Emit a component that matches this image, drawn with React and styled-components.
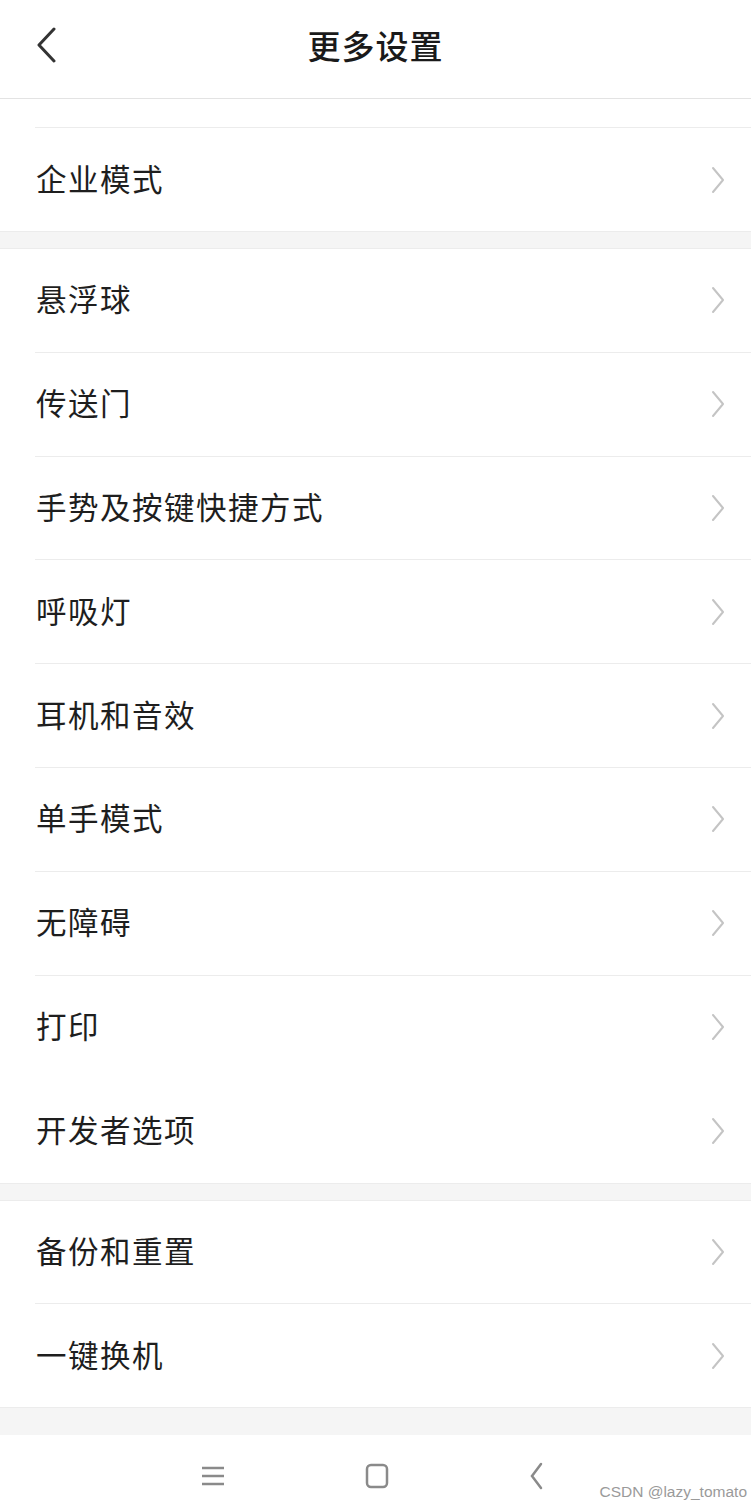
import React from 'react';
import styled, { createGlobalStyle } from 'styled-components';

const GlobalStyle = createGlobalStyle`
  html, body {
    margin: 0;
    padding: 0;
    background: #ffffff;
  }
  body {
    font-family: 'Noto Sans CJK SC', 'Noto Sans', sans-serif;
  }
`;

const StyledPage = styled.div`
  width: 751px;
  height: 1509px;
  display: flex;
  flex-direction: column;
  background: #f5f5f5;
  overflow: hidden;
  position: relative;
`;

const StyledHeader = styled.header`
  height: 98px;
  flex-shrink: 0;
  display: grid;
  grid-template-columns: 100px 1fr 100px;
  align-items: center;
  background: #fff;
  border-bottom: 1px solid #e3e3e3;

  h1 {
    margin: 0;
    text-align: center;
    font-size: 33px;
    font-weight: 500;
    color: #1a1a1a;
    letter-spacing: 1px;
    padding-bottom: 8px;
  }
`;

const BackButton = styled.div`
  display: flex;
  align-items: center;
  padding-left: 36px;
  padding-bottom: 8px;
`;

const Section = styled.section`
  background: #fff;
  border-top: ${({ $bordered }) => ($bordered ? '1px solid #ececec' : 'none')};
  border-bottom: 1px solid #ececec;
  margin-bottom: ${({ $gap }) => $gap}px;
`;

const Stub = styled.div`
  height: 28px;
  margin-left: 35px;
  border-bottom: 1px solid #ececec;
`;

const Row = styled.div`
  box-sizing: border-box;
  height: ${({ $h }) => $h}px;
  margin-left: 35px;
  padding-right: 24px;
  display: flex;
  align-items: center;
  justify-content: space-between;
  border-bottom: ${({ $last }) => ($last ? 'none' : '1px solid #ececec')};

  span {
    font-size: 30.5px;
    color: #1e1e1e;
    letter-spacing: 1.5px;
    padding-left: 1px;
    padding-bottom: 4px;
  }
`;

const NavBar = styled.nav`
  margin-top: auto;
  height: 74px;
  background: #fff;
  display: flex;
  align-items: center;
  justify-content: center;
  gap: 138px;
  padding-right: 6px;
  padding-top: 8px;
  box-sizing: border-box;
  position: relative;
`;

const Watermark = styled.div`
  position: absolute;
  right: 4px;
  bottom: 8px;
  font-family: 'Liberation Sans', Arial, sans-serif;
  font-size: 15.5px;
  color: #9a9a9a;
  white-space: nowrap;
`;

const Chevron = () => (
  <svg width="18" height="30" viewBox="0 0 18 30">
    <path d="M4 3 L14 15 L4 27" fill="none" stroke="#c4c4c4" strokeWidth="2" strokeLinecap="round" strokeLinejoin="round" />
  </svg>
);

const groups = [
  { items: ['企业模式'], stub: true, gap: 16 },
  {
    items: ['悬浮球', '传送门', '手势及按键快捷方式', '呼吸灯', '耳机和音效', '单手模式', '无障碍', '打印', '开发者选项'],
    noDivider: ['打印'],
    bordered: true,
    gap: 16,
  },
  { items: ['备份和重置', '一键换机'], bordered: true, gap: 0 },
];

const App = () => (
  <StyledPage>
    <GlobalStyle />
    <StyledHeader>
      <BackButton>
        <svg width="22" height="36" viewBox="0 0 22 36">
          <path d="M18 2 L3 18 L18 34" fill="none" stroke="#333" strokeWidth="3" strokeLinecap="round" strokeLinejoin="round" />
        </svg>
      </BackButton>
      <h1>更多设置</h1>
      <div />
    </StyledHeader>

    {groups.map((g, gi) => (
      <Section key={gi} $bordered={g.bordered} $gap={g.gap}>
        {g.stub && <Stub />}
        {g.items.map((item, i) => (
          <Row
            key={item}
            $h={g.items.length === 9 ? 103.8 : 103}
            $last={i === g.items.length - 1 || (g.noDivider && g.noDivider.includes(item))}>
            <span>{item}</span>
            <Chevron />
          </Row>
        ))}
      </Section>
    ))}

    <NavBar>
      <svg width="26" height="24" viewBox="0 0 26 24">
        <path d="M2 4 H24 M2 12 H24 M2 20 H24" stroke="#8a8a8a" strokeWidth="2.5" />
      </svg>
      <svg width="26" height="26" viewBox="0 0 26 26">
        <rect x="3" y="2" width="20" height="22" rx="4" fill="none" stroke="#8a8a8a" strokeWidth="2.5" />
      </svg>
      <svg width="18" height="30" viewBox="0 0 18 30">
        <path d="M13 3 L4 15 L13 27" fill="none" stroke="#8a8a8a" strokeWidth="2.5" strokeLinecap="round" />
      </svg>
      <Watermark>CSDN @lazy_tomato</Watermark>
    </NavBar>
  </StyledPage>
);

export default App;
